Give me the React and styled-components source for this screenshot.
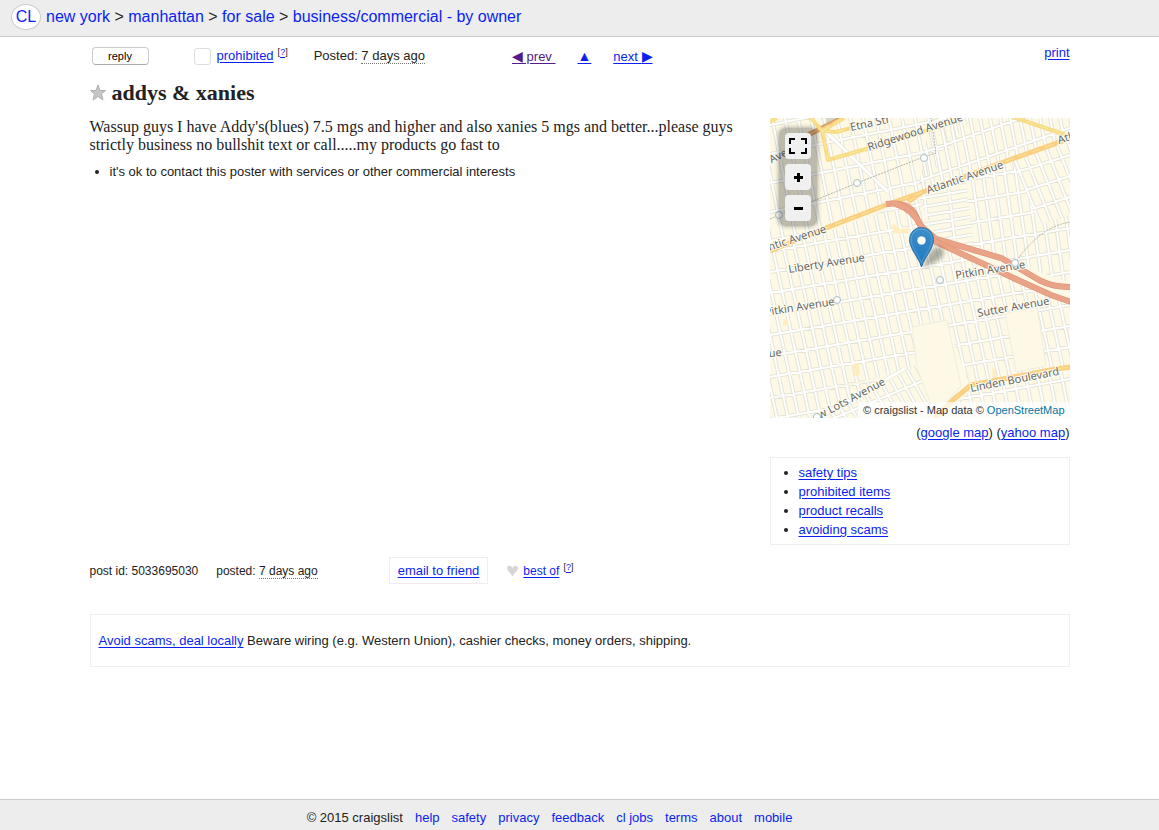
import React from "react";
import styled, { createGlobalStyle } from "styled-components";

const LINK = "#0a1ff0";

const GlobalStyle = createGlobalStyle`
  *, *::before, *::after { box-sizing: border-box; }
  body {
    margin: 0;
    background: #fff;
    color: #222;
    font-family: "Liberation Sans", Arial, Helvetica, sans-serif;
    font-size: 13px;
    line-height: 18px;
  }
  h1, p, ul { margin: 0; padding: 0; }
`;

const Page = styled.div`
  display: flex;
  flex-direction: column;
  min-height: 100vh;
`;

const Link = styled.a`
  color: ${(p) => (p.$visited ? "#551a8b" : LINK)};
  text-decoration: ${(p) => (p.$plain ? "none" : "underline")};
  text-underline-offset: 2px;
  white-space: pre;
`;

/* header */
const Header = styled.header`
  display: flex;
  align-items: center;
  gap: 5px;
  height: 37px;
  padding: 0 11px 3px;
  background: #ededed;
  border-bottom: 1px solid #ccc;
  font-size: 16px;
`;

const Logo = styled.a`
  display: flex;
  align-items: center;
  justify-content: center;
  width: 30px;
  height: 26px;
  border: 1px solid #ccc;
  border-radius: 50%;
  background: #fff;
  color: ${LINK};
  text-decoration: none;
`;

const Crumbs = styled.nav`
  white-space: nowrap;
`;

/* posting */
const Main = styled.main`
  flex: 1;
  width: 100%;
  max-width: 980px;
  margin: 0 auto;
  padding-top: 10px;
`;

const Toolbar = styled.div`
  display: flex;
  align-items: center;
  height: 18px;
`;

const ReplyButton = styled.button`
  width: 57px;
  height: 18px;
  margin: 0 45px 0 2px;
  padding: 0;
  border: 1px solid #ccc;
  border-bottom-color: #aaa;
  border-radius: 4px;
  background: #fff;
  color: #000;
  font: 11px/16px "Liberation Sans", Arial, sans-serif;
`;

const FlagBox = styled.input`
  appearance: none;
  width: 17px;
  height: 17px;
  margin: 0 6px 0 0;
  border: 1px solid #ddd;
  border-radius: 3px;
  background: #fff;
`;

const Help = styled.sup`
  margin-left: 4px;
  padding-bottom: 8px;
  font-size: 9px;
  line-height: 10px;
  vertical-align: baseline;
`;

const PostedAt = styled.span`
  margin-left: ${(p) => p.$gap}px;
  white-space: nowrap;
`;

const Time = styled.time`
  border-bottom: 1px dotted #777;
`;

const Pager = styled.nav`
  display: flex;
  gap: 22px;
  margin-left: 87px;
`;

const Arrow = styled.span`
  font-size: 14px;
`;

const PrintLink = styled(Link)`
  align-self: flex-start;
  margin-left: auto;
  line-height: 12px;
`;

const TitleRow = styled.div`
  display: flex;
  align-items: center;
  gap: 6px;
  margin: 15px 0 12px;
`;

const StarButton = styled.button`
  width: 16px;
  height: 18px;
  padding: 0;
  border: 0;
  background: none;
  svg { display: block; }
`;

const Title = styled.h1`
  font: bold 22px/26px "Liberation Serif", "Times New Roman", serif;
`;

const Columns = styled.div`
  display: flex;
  align-items: flex-start;
  justify-content: space-between;
  gap: 30px;
`;

const Body = styled.section`
  flex: 1;
`;

const BodyText = styled.p`
  font: 16px/18px "Liberation Serif", "Times New Roman", serif;
`;

const Notices = styled.ul`
  margin-top: 9px;
  padding-left: 20px;
`;

const Aside = styled.aside`
  width: 300px;
`;

const MapFrame = styled.div`
  position: relative;
  height: 300px;
  overflow: hidden;
  background: #fdf9e6;
  & > svg { display: block; width: 100%; height: 100%; }
`;

const MapControls = styled.div`
  position: absolute;
  top: 10px;
  left: 9px;
  display: flex;
  flex-direction: column;
  gap: 5px;
  padding: 5px 6px;
  border-radius: 7px;
  background: rgba(0, 0, 0, 0.25);
  box-shadow: 0 0 5px rgba(0, 0, 0, 0.4);
`;

const MapButton = styled.button`
  width: 26px;
  height: 26px;
  padding: 0;
  border: 0;
  border-radius: 4px;
  background: #f0f0f0;
  svg { display: block; }
`;

const Attribution = styled.div`
  position: absolute;
  right: 0;
  bottom: 0;
  padding: 0 5px;
  background: rgba(255, 255, 255, 0.7);
  color: #333;
  font-size: 11px;
  line-height: 16px;
  white-space: nowrap;
  a { color: #0078a8; text-decoration: none; }
`;

const MapLinks = styled.p`
  margin: 6px 0 15px;
  text-align: right;
`;

const TipsBox = styled.ul`
  padding: 5px 0 5px 28px;
  border: 1px solid #eee;
  line-height: 19px;
`;

const InfoRow = styled.div`
  display: flex;
  align-items: center;
  margin: 12px 0 30px;
  font-size: 12px;
`;

const EmailBox = styled.div`
  margin: 0 19px 0 71px;
  padding: 4px 8px;
  border: 1px solid #eee;
  font-size: 13px;
  line-height: 17px;
`;

const Heart = styled.svg`
  width: 11px;
  height: 12px;
  margin-right: 5px;
  fill: #d6d6d6;
`;

const ScamBox = styled.p`
  padding: 17px 8px;
  border: 1px solid #eee;
  line-height: 17px;
`;

const Footer = styled.footer`
  display: flex;
  justify-content: center;
  gap: 12px;
  height: 31px;
  padding: 9px 60px 0 0;
  border-top: 1px solid #ccc;
  background: #ededed;
  white-space: nowrap;
`;

/* map drawing */
const Label = styled.text`
  font: 11px "Noto Sans", "Open Sans", sans-serif;
  fill: #666;
  stroke: #fffdf2;
  stroke-width: 2px;
  paint-order: stroke;
`;

// Each district: its outline, slant and spacing of streets, slope and spacing of avenues.
const DISTRICTS = [
  { id: "nw", area: "0,0 200,0 150,74 0,128", lean: 0.2, step: 13, slope: -0.2, rise: 29 },
  { id: "n", area: "160,0 301,0 301,20 148,75", lean: 0.2, step: 10, slope: -0.35, rise: 27 },
  { id: "blocks", area: "148,77 196,62 204,130 166,120", lean: 0.12, step: 25, slope: -0.17, rise: 9 },
  { id: "ne", area: "194,61 242,43 270,106 301,98 301,165 204,131", lean: 0.14, step: 11, slope: -0.17, rise: 22 },
  { id: "e", area: "242,43 301,22 301,98 270,106", lean: 0.4, step: 12, slope: -0.32, rise: 21 },
  { id: "mid", area: "0,134 150,80 166,126 301,184 301,248 200,268 178,206 142,212 150,250 0,284", lean: 0.22, step: 11, slope: -0.17, rise: 21 },
  { id: "s", area: "146,246 170,300 46,300 122,262", lean: 0.56, step: 11, slope: -0.42, rise: 40 },
  { id: "ssw", area: "0,280 110,262 46,300 0,300", lean: 0.22, step: 11, slope: -0.17, rise: 21 },
  { id: "se", area: "204,270 301,252 301,300 168,300", lean: 0.2, step: 12, slope: -0.18, rise: 28 },
];

function streetPath({ lean, step, slope, rise }) {
  let d = "";
  for (let x = -180; x < 310; x += step) d += `M${x} 0L${x + lean * 300} 300`;
  for (let y = 7; y < 440; y += rise) d += `M0 ${y}L301 ${y + slope * 301}`;
  return d;
}

const ROADS = [
  { d: "M38 17L70 1", c: "#dca06c", w: 5 },
  { d: "M0 4L7 0M40 -1L52 13L58 42L96 31L191 2M52 13L66 14L85 9M52 13L74 0M243 -1L296 17", c: "#f8dc85", w: 4 },
  { d: "M0 133L56 110L116 87L150 75L231 45L301 20M138 84L152 74M164 301L183 282L201 267L286 251L301 249", c: "#fbcf80", w: 5 },
];

const HIGHWAYS = [
  "M116 86Q139 83 146 98Q152 115 166 123",
  "M126 86Q143 91 151 108L166 121L231 140L271 163Q283 169 301 169",
  "M164 123L220 149L250 163L281 177L301 184",
];

const LABELS = [
  [81, 13, -12, "Etna Str"],
  [99, 33, -18, "Ridgewood Avenue"],
  [158, 76, -19, "Atlantic Avenue"],
  [289, 26, -18, "Atl"],
  [57, 114, -18, "ntic Avenue", "end"],
  [36, 28, -27, "Avenue", "end"],
  [19, 155, -9, "Liberty Avenue"],
  [65, 187, -9, "Pitkin Avenue", "end"],
  [186, 161, -9, "Pitkin Avenue"],
  [208, 199, -10, "Sutter Avenue"],
  [12, 238, -5, "ue", "end"],
  [201, 274, -11, "Linden Boulevard"],
  [116, 266, -28, "ew Lots Avenue", "end"],
];

const STATIONS = [[87, 65], [9, 97], [154, 40], [245, 145], [67, 182], [170, 162], [47, 299]];

function StreetMap() {
  return (
    <svg viewBox="0 0 300 300" role="img" aria-label="Map of the area">
      <defs>
        {DISTRICTS.map((r) => (
          <clipPath key={r.id} id={`area-${r.id}`}>
            <polygon points={r.area} />
          </clipPath>
        ))}
        <linearGradient id="pin" x1="0" y1="0" x2="0" y2="1">
          <stop offset="0" stopColor="#3c8fcb" />
          <stop offset="1" stopColor="#1f78be" />
        </linearGradient>
        <filter id="soft" x="-30%" y="-30%" width="160%" height="160%">
          <feGaussianBlur stdDeviation="2" />
        </filter>
      </defs>
      <rect width="301" height="300" fill="#fdf9e6" />
      <path d="M51 0H66L56 6Z" fill="#d5d5c9" />
      {DISTRICTS.map((r) => {
        const d = streetPath(r);
        return (
          <g key={r.id} clipPath={`url(#area-${r.id})`} fill="none">
            <path d={d} stroke="#e5e4d6" strokeWidth="4" />
            <path d={d} stroke="#fff" strokeWidth="2" />
          </g>
        );
      })}
      <path d="M142 209L177 202L191 268L180 280L164 294L147 250ZM235 195L267 189L276 248L246 254Z" fill="#fdf9e6" stroke="#f0eedf" />
      <path d="M13 201l5 1v6l-5-1zM82 246l7-1 1 12-6 1zM122 106l9 5 8-2-1 6h-15zM222 250l3 1 2 9-4 1z" fill="#ffedc0" />
      <path d="M56 14L118 74M48 300L136 250" stroke="#e5e4d6" strokeWidth="4" />
      <path d="M56 14L118 74M48 300L136 250" stroke="#fff" strokeWidth="3" />
      <path d="M0 101L9 97L87 65L151 40L166 35L161 0M245 145Q270 108 301 104" fill="none" stroke="#b5b3a6" strokeDasharray="2 1" />
      {ROADS.map((r) => (
        <g key={r.c} fill="none" strokeLinejoin="round">
          <path d={r.d} stroke={r.c} strokeWidth={r.w} />
          <path d={r.d} stroke="#fff0b5" strokeWidth="1" strokeDasharray="9 5" opacity="0.6" />
        </g>
      ))}
      {HIGHWAYS.map((d) => (
        <g key={d} fill="none">
          <path d={d} stroke="#dc8f74" strokeWidth="6" />
          <path d={d} stroke="#e9a386" strokeWidth="5" />
        </g>
      ))}
      {LABELS.map(([x, y, angle, name, anchor]) => (
        <Label key={`${x}-${y}`} transform={`translate(${x} ${y}) rotate(${angle})`} textAnchor={anchor}>
          {name}
        </Label>
      ))}
      {STATIONS.map(([x, y]) => (
        <circle key={x} cx={x} cy={y} r="3.5" fill="#fffdf5" stroke="#a5bfd0" />
      ))}
      <path d="M152 149L162 131Q174 126 174 135Q173 143 152 149Z" fill="#000" opacity="0.3" filter="url(#soft)" />
      <path d="M151.500 149C149 140 139.500 131 139.500 121.500A12 12 0 0 1 163.500 121.500C163.500 131 154 140 151.500 149Z" fill="url(#pin)" stroke="#2b73ab" />
      <path d="M151.500 145C149 137 141 130 141 121.500A10.500 10.500 0 0 1 162 121.500C162 130 154 137 151.500 145Z" fill="none" stroke="#fff" opacity="0.2" />
      <circle cx="151.500" cy="122.500" r="4.500" fill="#fff" stroke="#2369a0" strokeOpacity="0.5" />
    </svg>
  );
}

const CONTROLS = [
  ["Full screen", "M5 6h6v2H7v4H5zM17 6h6v6h-2V8h-4zM5 16h2v4h4v2H5zM21 16h2v6h-6v-2h4z"],
  ["Zoom in", "M13 10h3v3h3v3h-3v3h-3v-3h-3v-3h3z"],
  ["Zoom out", "M10 13h9v3h-9z"],
];

const CRUMBS = ["new york", "manhattan", "for sale", "business/commercial - by owner"];
const TIPS = ["safety tips", "prohibited items", "product recalls", "avoiding scams"];
const FOOTER_LINKS = ["help", "safety", "privacy", "feedback", "cl jobs", "terms", "about", "mobile"];

function HelpMark() {
  return (
    <Help>
      [<Link href="#">?</Link>]
    </Help>
  );
}

export default function App() {
  return (
    <Page>
      <GlobalStyle />
      <Header>
        <Logo href="#">CL</Logo>
        <Crumbs>
          {CRUMBS.map((name, i) => (
            <React.Fragment key={name}>
              {i > 0 && " > "}
              <Link href="#" $plain>{name}</Link>
            </React.Fragment>
          ))}
        </Crumbs>
      </Header>

      <Main>
        <Toolbar>
          <ReplyButton type="button">reply</ReplyButton>
          <FlagBox type="checkbox" aria-label="flag as prohibited" />
          <Link href="#">prohibited</Link>
          <HelpMark />
          <PostedAt $gap={26}>
            Posted: <Time>7 days ago</Time>
          </PostedAt>
          <Pager>
            <Link href="#" $visited><Arrow>◀</Arrow>{" prev "}</Link>
            <Link href="#"><Arrow>▲</Arrow></Link>
            <Link href="#">{"next "}<Arrow>▶</Arrow></Link>
          </Pager>
          <PrintLink href="#">print</PrintLink>
        </Toolbar>

        <TitleRow>
          <StarButton type="button" aria-label="save this post">
            <svg width="16" height="18" viewBox="0 0 16 18">
              <path d="M8 1L10 6.500H15.500L11.500 10L13 16L8 12.500L3 16L4.500 10L.5 6.500H6Z" fill="#c6c6c6" stroke="#b0b0b0" />
            </svg>
          </StarButton>
          <Title>addys &amp; xanies</Title>
        </TitleRow>

        <Columns>
          <Body>
            <BodyText>
              Wassup guys I have Addy's(blues) 7.5 mgs and higher and also xanies 5 mgs and better...please guys
              strictly business no bullshit text or call.....my products go fast to
            </BodyText>
            <Notices>
              <li>it's ok to contact this poster with services or other commercial interests</li>
            </Notices>
          </Body>
          <Aside>
            <MapFrame>
              <StreetMap />
              <MapControls>
                {CONTROLS.map(([name, d]) => (
                  <MapButton key={name} type="button" aria-label={name}>
                    <svg width="26" height="26" viewBox="1 1 26 26">
                      <path d={d} />
                    </svg>
                  </MapButton>
                ))}
              </MapControls>
              <Attribution>
                © craigslist - Map data © <a href="#">OpenStreetMap</a>
              </Attribution>
            </MapFrame>
            <MapLinks>
              (<Link href="#">google map</Link>) (<Link href="#">yahoo map</Link>)
            </MapLinks>
            <TipsBox>
              {TIPS.map((tip) => (
                <li key={tip}>
                  <Link href="#">{tip}</Link>
                </li>
              ))}
            </TipsBox>
          </Aside>
        </Columns>

        <InfoRow>
          <span>post id: 5033695030</span>
          <PostedAt $gap={18}>
            posted: <Time>7 days ago</Time>
          </PostedAt>
          <EmailBox>
            <Link href="#">email to friend</Link>
          </EmailBox>
          <Heart viewBox="0 0 11 12" aria-hidden="true">
            <path d="M5.500 12C4.500 8.500 0 6 0 3C0 .5 4 -.5 5.500 3C7 -.5 11 .5 11 3C11 6 6.500 8.500 5.500 12Z" />
          </Heart>
          <Link href="#">best of</Link>
          <HelpMark />
        </InfoRow>

        <ScamBox>
          <Link href="#">Avoid scams, deal locally</Link> Beware wiring (e.g. Western Union), cashier checks, money
          orders, shipping.
        </ScamBox>
      </Main>

      <Footer>
        <span>© 2015 craigslist</span>
        {FOOTER_LINKS.map((name) => (
          <Link key={name} href="#" $plain>{name}</Link>
        ))}
      </Footer>
    </Page>
  );
}
